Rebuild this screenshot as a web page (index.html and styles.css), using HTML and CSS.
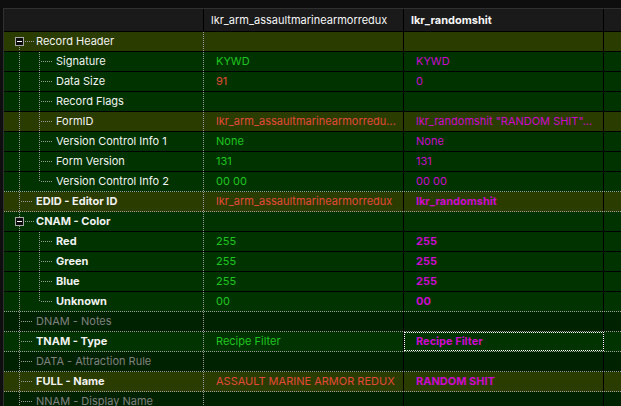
FILE: index.html
```html
<!DOCTYPE html>
<html>
<head>
<meta charset="utf-8">
<link rel="stylesheet" href="styles.css">
</head>
<body>
<div class="tree">
  <div class="hdr">
    <div class="hc"></div>
    <div class="hc">lkr_arm_assaultmarinearmorredux</div>
    <div class="hc b">lkr_randomshit</div>
    <div class="hc last"></div>
  </div>

  <div class="row olive">
    <div class="c1"><span class="cn node first"><span class="box"></span></span><span class="lb">Record Header</span></div>
    <div class="c"></div><div class="c"></div><div class="c c4"></div>
  </div>
  <div class="row grn">
    <div class="c1"><span class="g"></span><span class="cn mid"></span><span class="lb">Signature</span></div>
    <div class="c gv">KYWD</div><div class="c mv">KYWD</div><div class="c c4"></div>
  </div>
  <div class="row grn">
    <div class="c1"><span class="g"></span><span class="cn mid"></span><span class="lb">Data Size</span></div>
    <div class="c rv">91</div><div class="c mv">0</div><div class="c c4"></div>
  </div>
  <div class="row grn">
    <div class="c1"><span class="g"></span><span class="cn mid"></span><span class="lb">Record Flags</span></div>
    <div class="c"></div><div class="c"></div><div class="c c4"></div>
  </div>
  <div class="row olive">
    <div class="c1"><span class="g"></span><span class="cn mid"></span><span class="lb">FormID</span></div>
    <div class="c rv">lkr_arm_assaultmarinearmorredu...</div><div class="c mv">lkr_randomshit "RANDOM SHIT"...</div><div class="c c4"></div>
  </div>
  <div class="row grn">
    <div class="c1"><span class="g"></span><span class="cn mid"></span><span class="lb">Version Control Info 1</span></div>
    <div class="c gv">None</div><div class="c mv">None</div><div class="c c4"></div>
  </div>
  <div class="row grn">
    <div class="c1"><span class="g"></span><span class="cn mid"></span><span class="lb">Form Version</span></div>
    <div class="c gv">131</div><div class="c mv">131</div><div class="c c4"></div>
  </div>
  <div class="row grn dot">
    <div class="c1"><span class="g"></span><span class="cn end"></span><span class="lb">Version Control Info 2</span></div>
    <div class="c gv">00 00</div><div class="c mv">00 00</div><div class="c c4"></div>
  </div>
  <div class="row olive dot">
    <div class="c1"><span class="cn mid"></span><span class="lb b">EDID - Editor ID</span></div>
    <div class="c rv">lkr_arm_assaultmarinearmorredux</div><div class="c mv b">lkr_randomshit</div><div class="c c4"></div>
  </div>
  <div class="row grn">
    <div class="c1"><span class="cn node"><span class="box"></span></span><span class="lb b">CNAM - Color</span></div>
    <div class="c"></div><div class="c"></div><div class="c c4"></div>
  </div>
  <div class="row grn">
    <div class="c1"><span class="g"></span><span class="cn mid"></span><span class="lb b">Red</span></div>
    <div class="c gv">255</div><div class="c mv b">255</div><div class="c c4"></div>
  </div>
  <div class="row grn">
    <div class="c1"><span class="g"></span><span class="cn mid"></span><span class="lb b">Green</span></div>
    <div class="c gv">255</div><div class="c mv b">255</div><div class="c c4"></div>
  </div>
  <div class="row grn">
    <div class="c1"><span class="g"></span><span class="cn mid"></span><span class="lb b">Blue</span></div>
    <div class="c gv">255</div><div class="c mv b">255</div><div class="c c4"></div>
  </div>
  <div class="row grn dot">
    <div class="c1"><span class="g"></span><span class="cn end"></span><span class="lb b">Unknown</span></div>
    <div class="c gv">00</div><div class="c mv b">00</div><div class="c c4"></div>
  </div>
  <div class="row dk dot">
    <div class="c1"><span class="cn mid"></span><span class="lb dim">DNAM - Notes</span></div>
    <div class="c"></div><div class="c"></div><div class="c c4"></div>
  </div>
  <div class="row grn dot">
    <div class="c1"><span class="cn mid"></span><span class="lb b">TNAM - Type</span></div>
    <div class="c gv">Recipe Filter</div><div class="c mv b sel">Recipe Filter</div><div class="c c4"></div>
  </div>
  <div class="row dk dot">
    <div class="c1"><span class="cn mid"></span><span class="lb dim">DATA - Attraction Rule</span></div>
    <div class="c"></div><div class="c"></div><div class="c c4"></div>
  </div>
  <div class="row olive dot">
    <div class="c1"><span class="cn mid"></span><span class="lb b">FULL - Name</span></div>
    <div class="c rv">ASSAULT MARINE ARMOR REDUX</div><div class="c mv b">RANDOM SHIT</div><div class="c c4"></div>
  </div>
  <div class="row dk dot">
    <div class="c1"><span class="cn mid"></span><span class="lb dim">NNAM - Display Name</span></div>
    <div class="c"></div><div class="c"></div><div class="c c4"></div>
  </div>
</div>
</body>
</html>
```
FILE: styles.css
```css
html, body {
  margin: 0;
  background: #0e0e0e;
  height: 100%;
  overflow: hidden;
}
body {
  font-family: Inter, "Noto Sans", sans-serif;
  font-size: 11px;
  color: #f2f2f2;
}
.tree {
  margin: 8px 0 0 3px;
  border-top: 1px solid #303030;
  border-left: 1px solid #303030;
}
.hdr {
  display: grid;
  grid-template-columns: 200px 200px 200px 1fr;
  height: 23px;
  box-sizing: border-box;
  background: #1a1a1a;
  border-bottom: 1px solid #000;
}
.hc {
  border-right: 1px solid #000;
  padding-left: 7px;
  line-height: 22px;
  white-space: nowrap;
  overflow: hidden;
  color: #f6f6f6;
}
.hc.last { border-right: 0; }
.row {
  display: grid;
  grid-template-columns: 200px 200px 200px 1fr;
  height: 20px;
  box-sizing: border-box;
  border-bottom: 1px solid #000;
}
.row.dot { border-bottom: 1px dotted #9a9a9a; }
.olive { background: #2a3c00; }
.grn { background: #003300; }
.dk { background: #002200; }

.c {
  border-right: 1px solid #000;
  line-height: 19px;
  height: 19px;
  white-space: nowrap;
  overflow: hidden;
  padding-left: 12px;
}
.c4 { border-right: 0; }
.c1 {
  display: flex;
  height: 19px;
  border-right: 1px dotted #9a9a9a;
  line-height: 19px;
  white-space: nowrap;
  overflow: hidden;
}
.g, .cn {
  flex: none;
  height: 19px;
  background-repeat: no-repeat;
}
.g {
  width: 20px;
  background-image: repeating-linear-gradient(#9a9a9a 0 1px, transparent 1px 2px);
  background-size: 1px 100%;
  background-position: 15px 0;
}
.cn { width: 32px; }
.cn.mid {
  background-image:
    repeating-linear-gradient(#9a9a9a 0 1px, transparent 1px 2px),
    repeating-linear-gradient(to right, #9a9a9a 0 1px, transparent 1px 2px);
  background-size: 1px 100%, 12px 1px;
  background-position: 15px 0, 17px 9px;
}
.cn.end {
  background-image:
    repeating-linear-gradient(#9a9a9a 0 1px, transparent 1px 2px),
    repeating-linear-gradient(to right, #9a9a9a 0 1px, transparent 1px 2px);
  background-size: 1px 10px, 12px 1px;
  background-position: 15px 0, 17px 9px;
}
.cn.node {
  background-image:
    repeating-linear-gradient(#9a9a9a 0 1px, transparent 1px 2px),
    repeating-linear-gradient(to right, #9a9a9a 0 1px, transparent 1px 2px);
  background-size: 1px 100%, 9px 1px;
  background-position: 15px 0, 21px 9px;
}
.cn.node.first {
  background-size: 1px 6px, 9px 1px;
  background-position: 15px 13px, 21px 9px;
}
.box {
  display: block;
  width: 9px;
  height: 9px;
  box-sizing: border-box;
  margin: 5px 0 0 11px;
  border: 1px solid #a8a8a8;
  background: linear-gradient(#fff, #fff) center / 5px 1px no-repeat, #0c0c0c;
}
.lb { color: #f2f2f2; }
.dim { color: #808080; }
.b { font-weight: 700; }
.gv { color: #1fc51f; }
.rv { color: #e24a38; }
.mv { color: #cc0acc; }
.sel {
  outline: 1px dotted #ffffff;
  outline-offset: -1px;
}
```
